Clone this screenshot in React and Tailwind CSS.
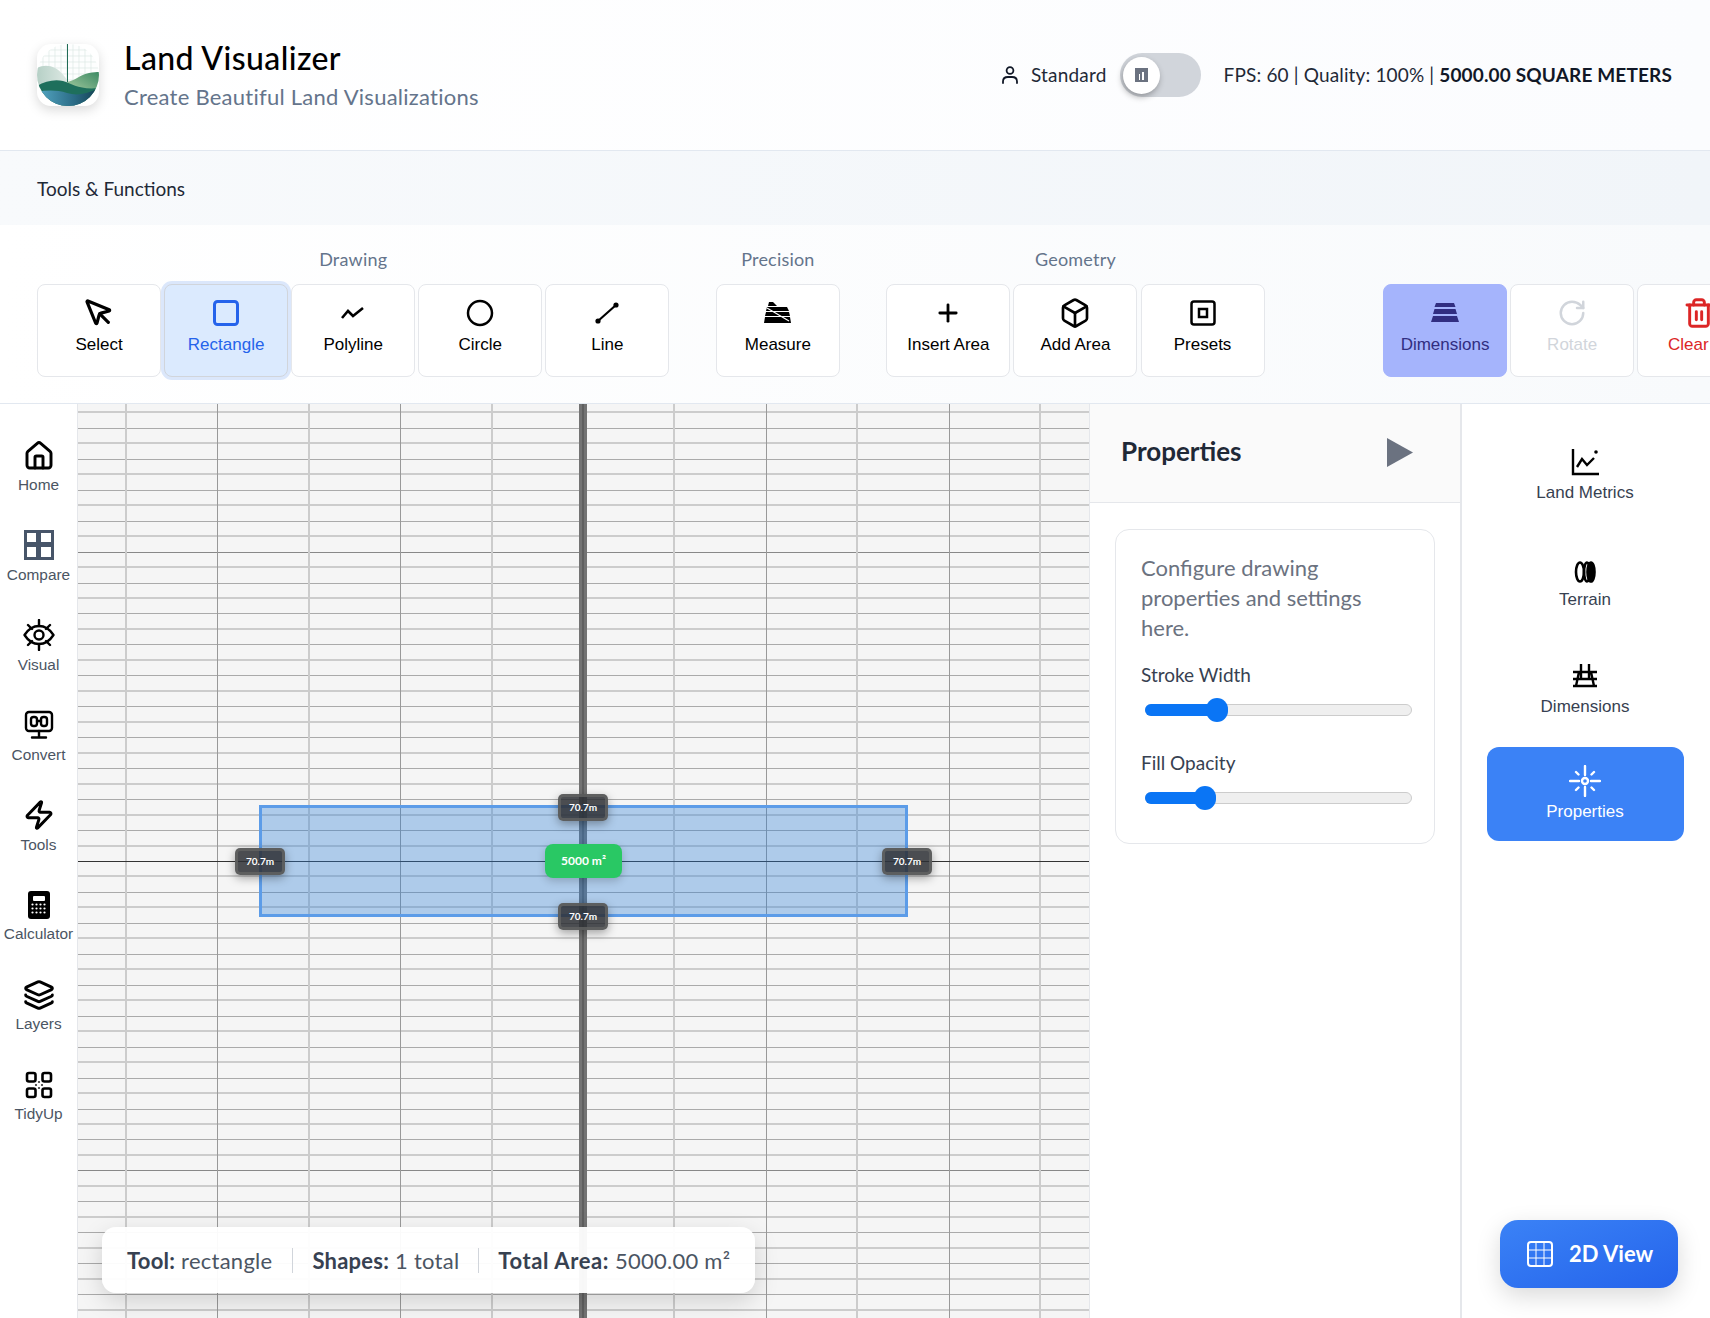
import { Box, Home, Layers, MousePointer, Plus, RotateCw, Trash2, Zap } from "lucide-react";

const ui = "font-['Lato','Noto_Sans',sans-serif]";
const arial = "font-['Liberation_Sans',Arial,sans-serif]";

const CX = 505;
const CY = 457;

function Grid() {
  const vs = [];
  for (let k = -5; k <= 5; k++) vs.push(k);
  const hs = [];
  for (let k = -30; k <= 30; k++) hs.push(k);
  return (
    <svg className="absolute inset-0" width="1012" height="915" shapeRendering="crispEdges">
      {hs.map((k) => {
        const y = Math.round(CY + k * 15.47);
        if (k === 0) return null;
        const major = k % 20 === 0;
        const odd = k % 2 !== 0;
        return (
          <line
            key={k}
            x1="0"
            x2="1012"
            y1={y}
            y2={y}
            stroke={major ? "#888888" : odd ? "#cccccc" : "#aaaaaa"}
            strokeWidth={odd ? 2 : 1}
          />
        );
      })}
      {vs.map((k) => {
        const x = Math.round(CX + k * 91.45);
        if (k === 0) return null;
        const odd = k % 2 !== 0;
        return (
          <line
            key={k}
            x1={x}
            x2={x}
            y1="0"
            y2="915"
            stroke={odd ? "#cccccc" : "#999999"}
            strokeWidth={odd ? 2 : 1}
          />
        );
      })}
      <line x1="0" x2="1012" y1={CY} y2={CY} stroke="#333333" strokeWidth="1" />
      <rect x={CX - 4} y="0" width="8" height="915" fill="#737373" />
      <rect x={CX - 1} y="0" width="2" height="915" fill="#5f5f5f" />
    </svg>
  );
}

function Logo() {
  return (
    <div className="h-[62px] w-[62px] shrink-0 rounded-[14px] bg-white shadow-[0_4px_12px_rgba(0,0,0,0.15)]">
      <svg viewBox="0 0 62 62" width="62" height="62">
        <defs>
          <clipPath id="disc">
            <circle cx="31" cy="31" r="31" />
          </clipPath>
          <linearGradient id="back" x1="0" x2="1" y1="0" y2="0">
            <stop offset="0" stopColor="#b6d0c6" />
            <stop offset="1" stopColor="#dfeae5" />
          </linearGradient>
          <linearGradient id="hillR" x1="0" x2="1" y1="1" y2="0">
            <stop offset="0" stopColor="#a9cda3" />
            <stop offset="1" stopColor="#3c8a63" />
          </linearGradient>
          <linearGradient id="water" x1="0" x2="1" y1="0" y2="0">
            <stop offset="0" stopColor="#55a8c4" />
            <stop offset="0.6" stopColor="#2b6b86" />
            <stop offset="1" stopColor="#123f4f" />
          </linearGradient>
        </defs>
        <g clipPath="url(#disc)">
          <rect width="62" height="62" fill="#fdfefe" />
          {[6, 12, 18, 24, 30, 36, 42, 48, 54].map((v) => (
            <g key={v} stroke="#d8e6e1" strokeWidth="0.6">
              <line x1={v} x2={v} y1="0" y2="62" />
              <line x1="0" x2="62" y1={v} y2={v} />
            </g>
          ))}
          <path d="M0 24C6 21 12 21 18 24C24 27 28 33 32 38V44H0Z" fill="url(#back)" />
          <path d="M30 38C38 37 44 30 52 29C56 28 60 28 62 28V48H36Z" fill="url(#hillR)" />
          <rect x="30" y="0" width="1" height="38" fill="#1f6b55" />
          <path d="M0 42C8 37 18 35 26 37C36 40 42 46 62 44V62H0Z" fill="#1e6f5c" />
          <path d="M0 48C10 46 20 46 30 49C40 52 50 50 62 44V62H0Z" fill="url(#water)" />
        </g>
      </svg>
    </div>
  );
}

function Header() {
  return (
    <header className={`${ui} flex h-[151px] shrink-0 items-center border-b border-[#e2e8f0] bg-gradient-to-r from-white to-[#fbfcfe] pl-[37px] pr-[38px]`}>
      <Logo />
      <div className="mb-[2px] ml-[25px]">
        <div className="text-[32px] leading-[40px] font-medium tracking-[0.4px] text-black">Land Visualizer</div>
        <div className="mt-[5px] text-[22px] leading-[28px] tracking-[0.25px] text-[#64748b]">Create Beautiful Land Visualizations</div>
      </div>
      <div className="ml-auto flex items-center">
        <svg width="20" height="20" viewBox="0 0 20 20" fill="none" stroke="#111827" strokeWidth="1.8" strokeLinecap="round">
          <circle cx="10" cy="5.500" r="3.400" />
          <path d="M3 18v-1.500C3 13.500 5 12 8 12h4c3 0 5 1.500 5 4.500V18" />
        </svg>
        <span className="ml-[11px] text-[19px] tracking-[0.2px] text-[#1f2937]">Standard</span>
        <div className="ml-[13px] flex h-[44px] w-[81px] items-center rounded-full bg-[#d1d5db] pl-[3px]">
          <div className="flex h-[37px] w-[37px] items-center justify-center rounded-full bg-white shadow-[-1px_3px_6px_rgba(0,0,0,0.3)]">
            <div className="flex h-[14px] w-[13px] items-end justify-center gap-[2px] bg-[#6b7280] pb-[2px]">
              <span className="h-[6px] w-[1.5px] bg-white"></span>
              <span className="h-[8px] w-[1.5px] bg-white"></span>
            </div>
          </div>
        </div>
        <div className="ml-[23px] text-[19px] tracking-[0.15px] text-[#1f2937]">
          FPS: 60 | Quality: 100% | <b className="font-bold text-[#111827]">5000.00 SQUARE METERS</b>
        </div>
      </div>
    </header>
  );
}

function MeasureIcon({ color = "#000000" }) {
  return (
    <svg width="30" height="24" viewBox="0 0 30 24" fill={color}>
      <path d="M6 1h4l4 4H5zM4 6h20l2 4H3zM3 11h23l1 4H2zM2 16h25l1 6H1z" />
      <path d="M4 7l22 13" stroke="#ffffff" strokeWidth="1.2" fill="none" />
    </svg>
  );
}

function DimensionsIcon() {
  return (
    <svg width="30" height="20" viewBox="0 0 30 20" fill="#312e81">
      <path d="M6 0h18l1.500 4H4.500zM4.500 6h21l1.500 5H3zM3 13h24l2 6H1z" />
    </svg>
  );
}

const drawing = [
  { label: "Select", icon: <MousePointer size={32} strokeWidth={2.4} color="#000" /> },
  {
    label: "Rectangle",
    active: true,
    icon: (
      <svg width="26" height="26" fill="none" stroke="#2563eb" strokeWidth="3">
        <rect x="1.500" y="1.500" width="23" height="23" rx="3" />
      </svg>
    ),
  },
  {
    label: "Polyline",
    icon: (
      <svg width="24" height="14" fill="none" stroke="#000" strokeWidth="2.600">
        <path d="M1 12l6-7 5 5 10-8" />
      </svg>
    ),
  },
  {
    label: "Circle",
    icon: (
      <svg width="28" height="28" fill="none" stroke="#000" strokeWidth="2.500">
        <circle cx="14" cy="14" r="12" />
      </svg>
    ),
  },
  {
    label: "Line",
    icon: (
      <svg width="24" height="22" fill="#000" stroke="#000" strokeWidth="2.200">
        <path d="M3 19L21 3" />
        <circle cx="3" cy="19" r="1.500" />
        <circle cx="21" cy="3" r="1.500" />
      </svg>
    ),
  },
];

const geometry = [
  { label: "Insert Area", icon: <Plus size={28} strokeWidth={2.4} color="#000" /> },
  { label: "Add Area", icon: <Box size={32} strokeWidth={2} color="#000" /> },
  {
    label: "Presets",
    icon: (
      <svg width="26" height="26" fill="none" stroke="#000" strokeWidth="2.500">
        <rect x="1.500" y="1.500" width="23" height="23" rx="2.500" />
        <rect x="9" y="9" width="8" height="8" />
      </svg>
    ),
  },
];

function ToolButton({ label, icon, active, className = "", labelClass = "" }) {
  const tone = active
    ? "border-[#d1d5db] bg-[#dbeafe] text-[#2563eb] shadow-[0_0_0_3px_#dbe7fb]"
    : "border-[#e5e7eb] bg-white text-black";
  return (
    <div className={`${arial} relative flex h-[93px] w-[124px] shrink-0 flex-col items-center rounded-[8px] border pt-[13px] text-[17px] ${tone} ${className}`}>
      <div className="flex h-[30px] items-center justify-center">{icon}</div>
      <div className={`mt-[7px] leading-[20px] ${labelClass}`}>{label}</div>
    </div>
  );
}

function Group({ title, items }) {
  return (
    <div>
      <div className={`${ui} mb-[15px] h-[20px] text-center text-[18px] leading-[20px] tracking-[0.2px] text-[#64748b]`}>{title}</div>
      <div className="flex gap-[3.1px]">
        {items.map((t) => (
          <ToolButton key={t.label} {...t} />
        ))}
      </div>
    </div>
  );
}

function Toolbar() {
  return (
    <div className="h-[178px] shrink-0 overflow-hidden bg-gradient-to-r from-white to-[#f8fafc]">
      <div className="flex w-[1800px] gap-[46.5px] pl-[37px] pt-[24px]">
        <Group title="Drawing" items={drawing} />
        <Group title="Precision" items={[{ label: "Measure", icon: <MeasureIcon /> }]} />
        <Group title="Geometry" items={geometry} />
        <div className="ml-[72px] flex gap-[3.1px] pt-[35px]">
          <ToolButton label="Dimensions" icon={<DimensionsIcon />} className="!border-[#a5b4fc] !bg-[#a5b4fc] !text-[#312e81]" />
          <ToolButton label="Rotate" icon={<RotateCw size={30} strokeWidth={2} color="#d1d5db" />} className="!text-[#d1d5db]" />
          <ToolButton label="Clear" labelClass="mr-[22px]" icon={<Trash2 size={32} strokeWidth={2.200} color="#dc2626" />} className="!text-[#dc2626]" />
        </div>
      </div>
    </div>
  );
}

const stroke = { fill: "none", stroke: "#000", strokeWidth: 2.4, strokeLinejoin: "round", strokeLinecap: "round" };

const leftNav = [
  { label: "Home", icon: <Home size={32} strokeWidth={2.2} color="#000" /> },
  {
    label: "Compare",
    icon: (
      <svg width="30" height="30" fill="none" stroke="#475569" strokeWidth="3">
        <rect x="1.500" y="1.500" width="12" height="12" />
        <rect x="15.500" y="1.500" width="13" height="12" />
        <rect x="1.500" y="15.500" width="12" height="13" />
        <rect x="15.500" y="15.500" width="13" height="13" />
      </svg>
    ),
  },
  {
    label: "Visual",
    icon: (
      <svg width="32" height="32" {...stroke}>
        <path d="M1.500 16C6 9 11 7 16 7s10 2 14.500 9C26 23 21 25 16 25S6 23 1.500 16z" />
        <circle cx="16" cy="16" r="4.500" />
        <path d="M16 1v6M16 25v6M5 6l4 4M27 6l-4 4M5 26l4-4M27 26l-4-4" />
      </svg>
    ),
  },
  {
    label: "Convert",
    icon: (
      <svg width="30" height="30" {...stroke}>
        <rect x="2" y="2" width="26" height="19" rx="3" />
        <rect x="7" y="7" width="6" height="9" rx="2.500" />
        <rect x="17" y="7" width="6" height="9" rx="2.500" />
        <path d="M13 11h4M15 21v6M8 27.500h14" />
      </svg>
    ),
  },
  { label: "Tools", icon: <Zap size={32} strokeWidth={2.2} color="#000" /> },
  {
    label: "Calculator",
    icon: (
      <svg width="24" height="30">
        <rect x="1" y="1" width="22" height="28" rx="3" fill="#000" />
        <rect x="6" y="6" width="12" height="5" rx="1" fill="#fff" />
        {[14.500, 18.500, 22.500].map((y) =>
          [5.500, 9.500, 13.500, 17.500].map((x) => <circle key={`${x}-${y}`} cx={x} cy={y} r="1.100" fill="#fff" />),
        )}
      </svg>
    ),
  },
  { label: "Layers", icon: <Layers size={32} strokeWidth={2.2} color="#000" /> },
  {
    label: "TidyUp",
    icon: (
      <svg width="28" height="28">
        <g fill="none" stroke="#000" strokeWidth="2.600">
          <rect x="2" y="2" width="8.500" height="8.500" rx="2" />
          <rect x="17.500" y="2" width="8.500" height="8.500" rx="2" />
          <rect x="2" y="17.500" width="8.500" height="8.500" rx="2" />
          <rect x="17.500" y="17.500" width="8.500" height="8.500" rx="2" />
        </g>
        {[[14, 11], [11, 14], [17, 14], [14, 17]].map(([x, y]) => (
          <circle key={`${x}${y}`} cx={x} cy={y} r="1.100" fill="#333" />
        ))}
      </svg>
    ),
  },
];

function LeftNav() {
  return (
    <nav className={`${arial} flex w-[78px] shrink-0 flex-col items-center border-r border-[#e5e7eb] bg-white pt-[31px]`}>
      {leftNav.map((n) => (
        <div key={n.label} className="flex h-[89.9px] w-[77px] flex-col items-center">
          <div className="flex h-[41px] items-center justify-center">{n.icon}</div>
          <div className="whitespace-nowrap text-[15.400px] leading-[18px] text-[#4b5563]">{n.label}</div>
        </div>
      ))}
    </nav>
  );
}

function Tag({ className, children }) {
  return (
    <div className={`absolute flex h-[27px] w-[50px] items-center justify-center rounded-[5px] border-[3px] border-[rgba(100,100,100,0.8)] bg-[rgba(45,47,52,0.85)] text-[10px] font-bold text-white shadow-[0_3px_10px_rgba(0,0,0,0.35)] ${ui} ${className}`}>
      {children}
    </div>
  );
}

function Canvas() {
  return (
    <main className="relative flex-1 overflow-hidden bg-[#f5f5f5]">
      <Grid />
      <div className="absolute left-[181px] top-[401px] h-[112px] w-[649px] border-[3px] border-[#5c9ce8] bg-[rgba(42,125,214,0.35)]"></div>
      <Tag className="left-[480px] top-[390px]">70.7m</Tag>
      <Tag className="left-[480px] top-[499px]">70.7m</Tag>
      <Tag className="left-[157px] top-[444px]">70.7m</Tag>
      <Tag className="left-[804px] top-[444px]">70.7m</Tag>
      <div className={`${ui} absolute left-[467px] top-[440px] flex h-[34px] w-[77px] items-center justify-center rounded-[8px] bg-[#29c864] text-[12px] font-bold text-white shadow-[0_3px_8px_rgba(0,0,0,0.2)]`}>
        5000 m²
      </div>
      <div className={`${ui} absolute bottom-[25px] left-[24px] flex h-[66px] w-[653px] items-center rounded-[14px] bg-white/95 pl-[25px] text-[22px] tracking-[0.25px] text-[#4b5563] shadow-[0_8px_24px_rgba(0,0,0,0.15)]`}>
        <span className="whitespace-nowrap">
          <b className="font-bold text-[#374151]">Tool:</b> rectangle
        </span>
        <span className="ml-[20px] h-[25px] w-px bg-[#d1d5db]"></span>
        <span className="ml-[19px] whitespace-nowrap">
          <b className="font-bold text-[#374151]">Shapes:</b> 1 total
        </span>
        <span className="ml-[19px] h-[25px] w-px bg-[#d1d5db]"></span>
        <span className="ml-[19px] whitespace-nowrap">
          <b className="font-bold tracking-[0.6px] text-[#374151]">Total Area:</b> 5000.00 m²
        </span>
      </div>
    </main>
  );
}

function Slider({ label, fill, thumb }) {
  return (
    <div>
      <div className="text-[19px] leading-[24px] text-[#374151]">{label}</div>
      <div className="relative mt-[17px] ml-[4px] h-[12px] w-[267px] rounded-full border border-[#cccccc] bg-[#efefef]">
        <div className={`absolute -inset-y-px -left-px rounded-full bg-[#0a75f5] ${fill}`}></div>
        <div className={`absolute -top-[7px] h-[24px] w-[22px] rounded-full bg-[#0a75f5] ${thumb}`}></div>
      </div>
    </div>
  );
}

function PropertiesPanel() {
  return (
    <aside className={`${ui} w-[371px] shrink-0 border-l border-[#e5e7eb] bg-white`}>
      <div className="flex h-[99px] items-center justify-between border-b border-[#e5e7eb] bg-[#fafafa] pb-[4px] pl-[31px] pr-[47px]">
        <h2 className="text-[26px] font-bold text-[#1f2937]">Properties</h2>
        <svg width="26" height="29" className="mt-[2px]">
          <polygon points="0,0 26,14.500 0,29" fill="#6b7280" />
        </svg>
      </div>
      <div className="mx-[25px] mt-[26px] h-[315px] rounded-[14px] border border-[#e5e7eb] bg-white px-[25px] pt-[23px]">
        <p className="text-[22px] leading-[30px] text-[#6b7280]">Configure drawing properties and settings here.</p>
        <div className="mt-[20px]">
          <Slider label="Stroke Width" fill="w-[72px]" thumb="left-[60px]" />
        </div>
        <div className="mt-[35px]">
          <Slider label="Fill Opacity" fill="w-[60px]" thumb="left-[48px]" />
        </div>
      </div>
    </aside>
  );
}

const rightNav = [
  {
    label: "Land Metrics",
    icon: (
      <svg width="28" height="28" fill="none" stroke="#000" strokeWidth="2.400">
        <path d="M2 1v25h26" />
        <path d="M6 19l5-8 5 6 7-7" />
        <circle cx="25" cy="4" r="1.800" fill="#000" stroke="none" />
      </svg>
    ),
  },
  {
    label: "Terrain",
    icon: (
      <svg width="22" height="22" fill="none" stroke="#000" strokeWidth="2.600">
        <ellipse cx="6" cy="11" rx="4" ry="9.500" />
        <ellipse cx="13" cy="11" rx="3" ry="9.500" />
        <ellipse cx="17" cy="11" rx="3.500" ry="9.500" fill="#000" />
      </svg>
    ),
  },
  {
    label: "Dimensions",
    lift: "pb-[6px]",
    icon: (
      <svg width="26" height="24" fill="none" stroke="#000" strokeWidth="2.400">
        <path d="M1 8h24M1 15h24M1 22h24M9 0v15M17 0v15M7 8l-3 14M19 8l3 14" />
      </svg>
    ),
  },
  {
    label: "Properties",
    active: true,
    icon: (
      <svg width="32" height="32" fill="none" stroke="#fff" strokeWidth="2.400" strokeLinecap="round">
        <circle cx="16" cy="16" r="3" />
        <path d="M16 1v9M16 22v9M1 16h9M22 16h9M7 7l2.500 2.500M25 7l-2.500 2.500M7 25l2.500-2.500M25 25l-2.500-2.500" />
      </svg>
    ),
  },
];

function RightNav() {
  return (
    <aside className={`${arial} relative flex w-[250px] shrink-0 flex-col items-center gap-[13px] border-l-2 border-[#e5e7eb] bg-white pr-[2px] pt-[22px]`}>
      {rightNav.map((n) => (
        <div
          key={n.label}
          className={`flex h-[94px] w-[197px] flex-col items-center rounded-[12px] text-[17px] ${n.active ? "bg-[#3b82f6] text-white" : "text-[#374151]"}`}
        >
          <div className={`flex h-[54px] items-end justify-center ${n.lift || "pb-[4px]"}`}>{n.icon}</div>
          <div className={`leading-[20px] ${n.active ? "mt-[1px]" : "mt-[3px]"}`}>{n.label}</div>
        </div>
      ))}
      <div className={`${ui} absolute bottom-[30px] left-[38px] flex h-[68px] w-[178px] items-center rounded-[18px] bg-gradient-to-br from-[#3b82f6] to-[#2563eb] pl-[27px] text-[22px] font-bold text-white shadow-[0_8px_24px_rgba(0,0,0,0.15)]`}>
        <svg width="26" height="26" fill="none" stroke="#fff">
          <rect x="1" y="1" width="24" height="24" rx="3" strokeWidth="2" />
          <path d="M9 1v24M17 1v24M1 9h24M1 17h24" strokeWidth="1" />
        </svg>
        <span className="ml-[16px] pb-[2px]">2D View</span>
      </div>
    </aside>
  );
}

export default function App() {
  return (
    <div className="flex h-screen w-full flex-col overflow-hidden bg-white">
      <Header />
      <div className={`${ui} flex h-[74px] shrink-0 items-center bg-gradient-to-r from-[#f8fafc] to-[#f1f5f9] pl-[37px] pt-[2px] text-[19px] text-[#1f2937]`}>
        Tools &amp; Functions
      </div>
      <Toolbar />
      <div className="flex min-h-0 flex-1 border-t border-[#e2e8f0]">
        <LeftNav />
        <Canvas />
        <PropertiesPanel />
        <RightNav />
      </div>
    </div>
  );
}
